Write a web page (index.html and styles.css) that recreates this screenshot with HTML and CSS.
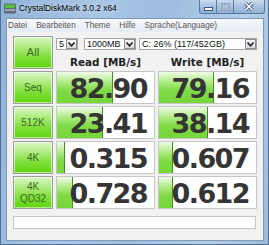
FILE: index.html
```
<!DOCTYPE html>
<html lang="de">
<head>
  <meta charset="UTF-8" />
  <title>CrystalDiskMark 3.0.2 x64</title>
  <link rel="stylesheet" href="styles.css">
</head>
<body>
  <div class="window">
    <!-- Titelleiste -->
    <div class="titlebar">
      <svg class="app-icon" width="12" height="11" viewBox="0 0 12 11">
        <rect x="0" y="0.5" width="12" height="10" rx="1.5" fill="#5d6d7a"/>
        <rect x="1" y="1.5" width="10" height="3.5" rx="1" fill="#55c43a"/>
        <rect x="1" y="6.5" width="10" height="1" fill="#dde5ec"/>
      </svg>
      <span class="title">CrystalDiskMark 3.0.2 x64</span>
      <div class="caption">
        <span class="cap cap-min">
          <svg width="9" height="4" viewBox="0 0 9 4"><rect x="0.5" y="0.5" width="8" height="3" fill="#fff" stroke="#3b5775"/></svg>
        </span>
        <span class="cap cap-max">
          <svg width="9" height="8" viewBox="0 0 9 8"><rect x="1" y="1" width="7" height="6" fill="none" stroke="#3b5775" stroke-width="2"/><rect x="1" y="1" width="7" height="6" fill="none" stroke="#fff" stroke-width="1"/></svg>
        </span>
        <span class="cap cap-close">
          <svg width="10" height="9" viewBox="0 0 10 9"><path d="M1.5 1 L8.5 8 M8.5 1 L1.5 8" stroke="#3b5775" stroke-width="3.2"/><path d="M1.5 1 L8.5 8 M8.5 1 L1.5 8" stroke="#fff" stroke-width="1.6"/></svg>
        </span>
      </div>
    </div>

    <div class="client">
      <div class="menubar">
        <span>Datei</span>
        <span>Bearbeiten</span>
        <span>Theme</span>
        <span>Hilfe</span>
        <span>Sprache(Language)</span>
      </div>

      <div class="board">
        <div class="btn btn-all">All</div>
        <div class="top">
          <div class="combos">
            <div class="combo combo-count"><span>5</span><i class="drop"><svg width="9" height="7" viewBox="0 0 9 7"><polyline points="1.5,1.5 4.5,4.8 7.5,1.5" fill="none" stroke="#222" stroke-width="1.6"/></svg></i></div>
            <div class="combo combo-size"><span>1000MB</span><i class="drop"><svg width="9" height="7" viewBox="0 0 9 7"><polyline points="1.5,1.5 4.5,4.8 7.5,1.5" fill="none" stroke="#222" stroke-width="1.6"/></svg></i></div>
            <div class="combo combo-drive"><span>C: 26% (117/452GB)</span><i class="drop"><svg width="9" height="7" viewBox="0 0 9 7"><polyline points="1.5,1.5 4.5,4.8 7.5,1.5" fill="none" stroke="#222" stroke-width="1.6"/></svg></i></div>
          </div>
          <div class="heads">
            <div>Read [MB/s]</div>
            <div>Write [MB/s]</div>
          </div>
        </div>

        <div class="btn">Seq</div>
        <div class="val"><div class="bar" style="width:58%"></div><span>82.90</span></div>
        <div class="val"><div class="bar" style="width:57%"></div><span>79.16</span></div>

        <div class="btn">512K</div>
        <div class="val"><div class="bar" style="width:47%"></div><span>23.41</span></div>
        <div class="val"><div class="bar" style="width:50%"></div><span>38.14</span></div>

        <div class="btn">4K</div>
        <div class="val"><div class="bar" style="width:8%"></div><span>0.315</span></div>
        <div class="val"><div class="bar" style="width:14%"></div><span>0.607</span></div>

        <div class="btn btn-two">4K<br>QD32</div>
        <div class="val"><div class="bar" style="width:16.5%"></div><span>0.728</span></div>
        <div class="val"><div class="bar" style="width:14%"></div><span>0.612</span></div>

        <div class="comment"></div>
      </div>
    </div>
  </div>
</body>
</html>
```

FILE: styles.css
```
* {
  margin: 0;
  padding: 0;
  box-sizing: border-box;
}

body {
  width: 269px;
  height: 245px;
  overflow: hidden;
  background: #9dbbdc;
}

.window {
  width: 269px;
  height: 245px;
  background: linear-gradient(100deg, #8fb1d8 0%, #a9c6e6 30%, #9ebddf 55%, #b6cfea 80%, #9dbadb 100%);
  border: 1px solid #4f6f93;
  border-top: none;
  display: flex;
  flex-direction: column;
}

/* Titelleiste */
.titlebar {
  height: 18px;
  display: flex;
  align-items: flex-start;
  padding-left: 3px;
}

.app-icon {
  margin-top: 3px;
  margin-right: 3px;
}

.title {
  font: 8.4px/17px "Liberation Sans", sans-serif;
  color: #000;
  text-shadow: 0 0 4px rgba(255, 255, 255, 0.9);
}

.caption {
  margin-left: auto;
  margin-right: 3px;
  display: flex;
}

.cap {
  height: 14px;
  display: flex;
  align-items: center;
  justify-content: center;
  background: linear-gradient(#c9dbee, #a7c1df 50%, #93b1d4 100%);
  border: 1px solid #5b7aa0;
  border-top: none;
  border-left: none;
}

.cap-min {
  width: 18px;
  border-left: 1px solid #5b7aa0;
  border-bottom-left-radius: 3px;
}

.cap-min svg {
  margin-top: 5px;
}

.cap-max {
  width: 17px;
}

.cap-close {
  width: 31px;
  border-bottom-right-radius: 3px;
}

/* Fensterinhalt */
.client {
  margin-left: 5px;
  width: 258px;
  height: 223px;
  border: 1px solid #7f98b8;
  background: #f1f1f1;
  display: flex;
  flex-direction: column;
}

.menubar {
  height: 13px;
  display: flex;
  gap: 9px;
  padding-left: 1px;
  background: linear-gradient(#f7f9fc, #e6ecf4);
  font: 8.2px/13px "Liberation Sans", sans-serif;
  color: #555;
}

.board {
  display: grid;
  grid-template-columns: 40px 99px 99px;
  grid-template-rows: 33px 33px 33px 33px 33px 18px;
  column-gap: 3px;
  row-gap: 2px;
  padding: 4px 0 0 6px;
}

.btn {
  border: 1px solid #9d9d9d;
  background: linear-gradient(#dcf6c8 0%, #b3ec86 30%, #7fde3a 65%, #5fd50f 100%);
  box-shadow: inset 0 0 0 1px rgba(255, 255, 255, 0.55);
  display: flex;
  align-items: center;
  justify-content: center;
  text-align: center;
  font: 10px/11px "Liberation Sans", sans-serif;
  color: #3c6a22;
}

.btn-all {
  font-size: 11.5px;
}

.btn-two {
  line-height: 12px;
  padding-top: 1px;
}

.top {
  grid-column: 2 / 4;
  display: flex;
  flex-direction: column;
}

.combos {
  margin-top: 2px;
  height: 12px;
  display: flex;
}

.combo {
  height: 12px;
  display: flex;
  align-items: center;
  background: #fff;
  border: 1px solid #a3a6ad;
  font: 9px/10px "Liberation Sans", sans-serif;
  color: #111;
  padding-left: 2px;
}

.combo span {
  flex: 1;
}

.combo-count {
  width: 22px;
}

.combo-size {
  width: 52px;
  margin-left: 6px;
}

.combo-drive {
  width: 118px;
  margin-left: 3px;
}

.drop {
  width: 11px;
  height: 10px;
  display: flex;
  align-items: center;
  justify-content: center;
  border: 1px solid #8e8f93;
  background: linear-gradient(#f6f6f6, #d9d9d9);
}

.heads {
  margin-top: 5px;
  display: grid;
  grid-template-columns: 99px 99px;
  column-gap: 3px;
  font: bold 10.4px/14px "DejaVu Sans", sans-serif;
  color: #222;
  text-align: center;
}

.val {
  position: relative;
  overflow: hidden;
  background: #fff;
  border: 1px solid #c6c6c6;
  text-align: right;
  padding: 2px 7px 0 0;
  font: bold 27px/29px "DejaVu Sans", sans-serif;
  letter-spacing: -1.6px;
  color: #353535;
}

.val span {
  position: relative;
}

.bar {
  position: absolute;
  left: 0;
  top: 0;
  bottom: 0;
  background: linear-gradient(#f0fbe8 0%, #b4ec8c 30%, #7fda45 60%, #76d63a 100%);
  border-right: 1px solid #3e9420;
}

.comment {
  grid-column: 1 / 4;
  margin-top: 5px;
  margin-right: 1px;
  background: #fff;
  border: 1px solid #c6c6c6;
}
```
